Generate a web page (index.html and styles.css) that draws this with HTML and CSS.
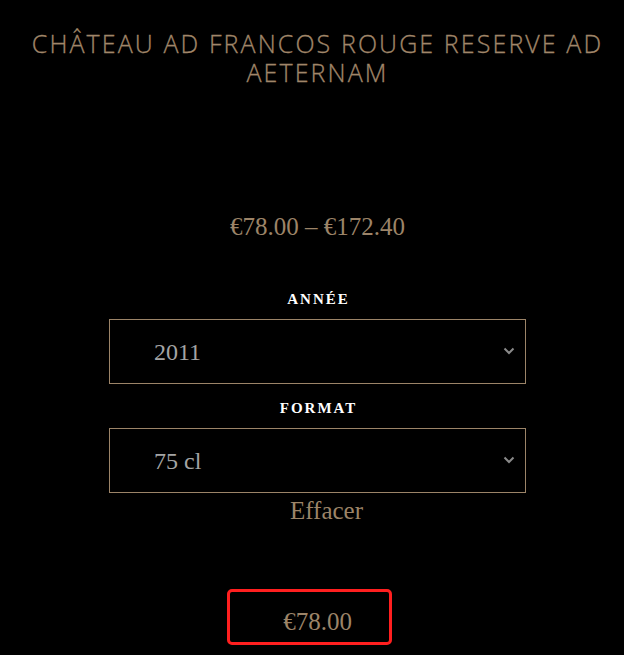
FILE: index.html
```html
<!DOCTYPE html>
<html lang="fr">
<head>
<meta charset="utf-8">
<link rel="stylesheet" href="styles.css">
</head>
<body>
<main class="product">
  <h1 class="title">CHÂTEAU AD FRANCOS ROUGE RESERVE AD AETERNAM</h1>
  <p class="price-range">€78.00 – €172.40</p>
  <form class="variations">
    <div class="field">
      <label class="label">ANNÉE</label>
      <div class="select">
        <span class="value">2011</span>
        <svg class="chev" width="12" height="8" viewBox="0 0 12 8"><path d="M1.5 1.5 L6 6 L10.5 1.5" fill="none" stroke="#8a8a8a" stroke-width="2"/></svg>
      </div>
    </div>
    <div class="field">
      <label class="label">FORMAT</label>
      <div class="select">
        <span class="value">75 cl</span>
        <svg class="chev" width="12" height="8" viewBox="0 0 12 8"><path d="M1.5 1.5 L6 6 L10.5 1.5" fill="none" stroke="#8a8a8a" stroke-width="2"/></svg>
      </div>
    </div>
    <a class="reset">Effacer</a>
  </form>
  <div class="price-box">€78.00</div>
</main>
</body>
</html>
```

FILE: styles.css
```css
html, body {
  margin: 0;
  padding: 0;
  background: #000;
}
body {
  width: 624px;
  height: 655px;
  overflow: hidden;
  font-family: "Liberation Serif", serif;
  color: #9c8468;
}
.product {
  display: flex;
  flex-direction: column;
  align-items: center;
  padding-top: 29px;
  padding-left: 11px;
}
.title {
  margin: 0;
  width: 614px;
  text-align: center;
  font-family: "Open Sans", sans-serif;
  font-weight: 300;
  font-size: 25px;
  line-height: 29px;
  letter-spacing: 2.1px;
  color: #a08669;
  -webkit-text-stroke: 0.3px #a08669;
}
.price-range {
  margin: 125px 0 0;
  font-size: 25px;
  line-height: 30px;
  color: #9c8468;
}
.variations {
  margin-top: 48px;
  width: 417px;
  display: flex;
  flex-direction: column;
  align-items: center;
}
.field {
  width: 100%;
  display: flex;
  flex-direction: column;
  align-items: center;
}
.field + .field {
  margin-top: 15px;
}
.label {
  font-size: 15px;
  font-weight: bold;
  letter-spacing: 2px;
  color: #fff;
  line-height: 18px;
  margin-bottom: 11px;
  padding-left: 2px;
}
.select {
  box-sizing: border-box;
  width: 417px;
  height: 65px;
  border: 1px solid #9c8468;
  display: flex;
  align-items: center;
  justify-content: space-between;
  padding: 2px 10px 0 44px;
}
.value {
  font-size: 24px;
  color: #a4a4a4;
}
.chev {
  display: block;
  margin-top: -4px;
}
.reset {
  font-size: 25px;
  line-height: 30px;
  margin-top: 3px;
  padding-left: 18px;
  color: #9c8468;
}
.price-box {
  box-sizing: border-box;
  margin-top: 63px;
  margin-right: 16px;
  width: 165px;
  height: 56px;
  border: 3px solid #ff1f1f;
  border-radius: 5px;
  display: flex;
  align-items: center;
  justify-content: center;
  padding-top: 9px;
  padding-left: 16px;
  font-size: 25px;
  color: #9c8468;
}
```
